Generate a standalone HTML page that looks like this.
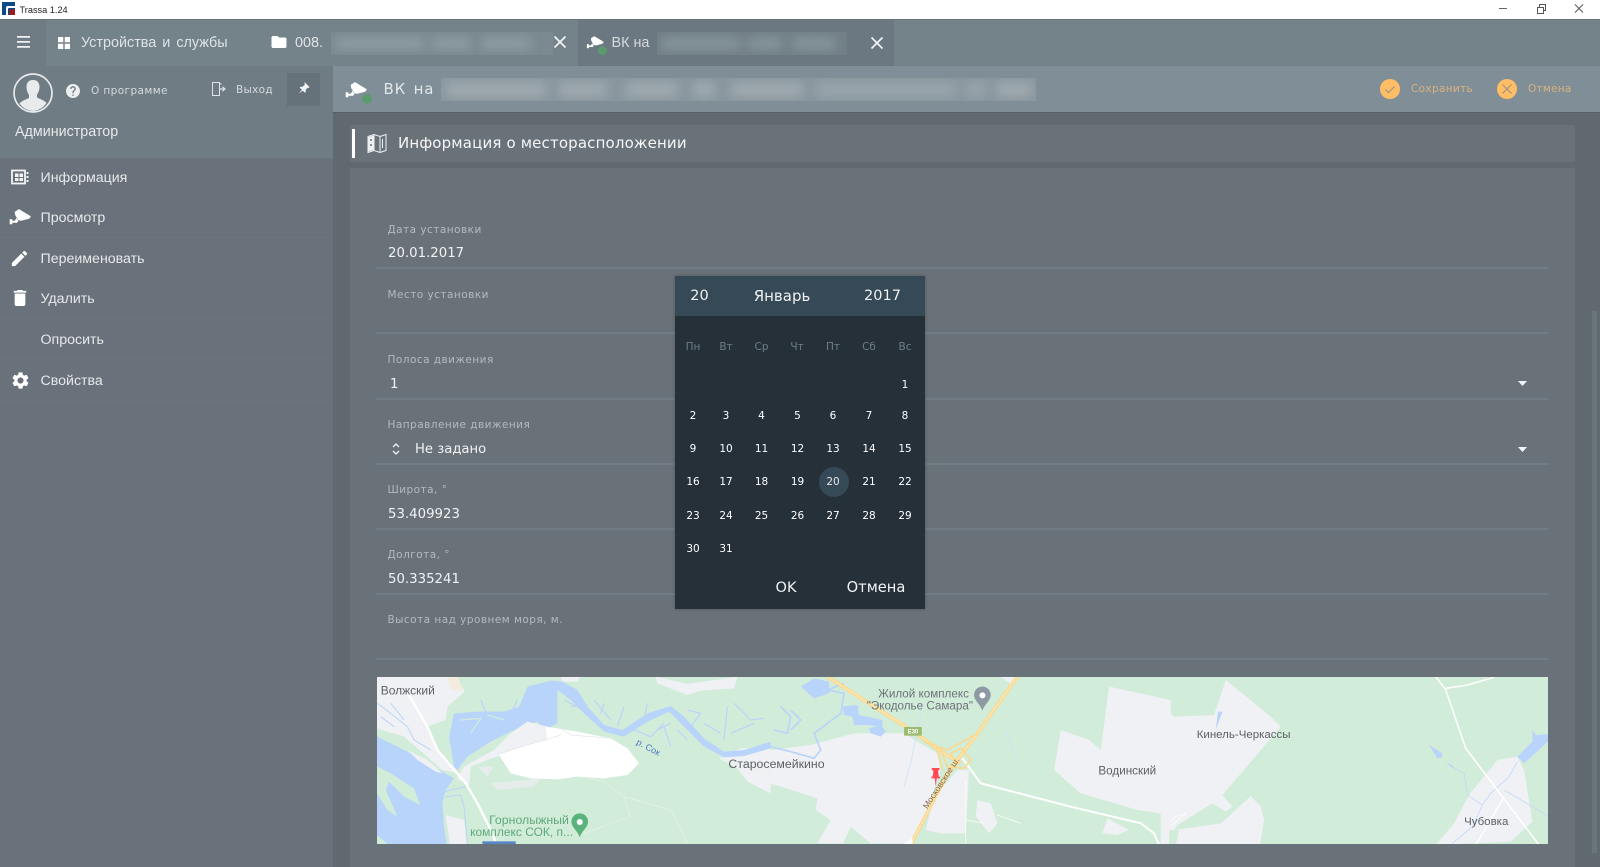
<!DOCTYPE html>
<html lang="ru">
<head>
<meta charset="utf-8">
<title>Trassa 1.24</title>
<style>
html,body{margin:0;padding:0;width:1600px;height:867px;overflow:hidden;background:#60696d}
#r{position:relative;width:1600px;height:867px;overflow:hidden;font-family:"Liberation Sans",sans-serif;color:#e8ebec}
.b{position:absolute}
.t{position:absolute;white-space:nowrap;line-height:1}
.d{font-family:"DejaVu Sans",sans-serif}
.l{font-family:"DejaVu Sans",sans-serif;font-size:10.5px;letter-spacing:.47px;color:#b4babd}
.v{font-family:"DejaVu Sans",sans-serif;font-size:13.3px;color:#f0f2f3}
.m{font-size:14.2px;color:#e6e9ea;left:40.5px}
svg{position:absolute;overflow:visible}
.s{position:absolute;background:#717c84;height:2px;left:376px;width:1172px}
.bl{position:absolute;filter:blur(5px);border-radius:4px}
.w{font-family:"DejaVu Sans",sans-serif;font-size:10.5px;color:#6f7d86;transform:translateX(-50%)}
.n{font-family:"DejaVu Sans",sans-serif;font-size:10.5px;color:#fff;transform:translateX(-50%)}
</style>
</head>
<body>
<div id="r">
<!-- title bar -->
<div class="b" style="left:0;top:0;width:1600px;height:19px;background:#fff"></div>
<div class="b" style="left:0;top:19px;width:1600px;height:1px;background:#687378"></div>
<svg style="left:2px;top:2px" width="14" height="14"><rect width="13" height="13" fill="#0f4a86"/><path d="M4 13V6q0-2 2-2h7v2H7q-1 0-1 1v6z" fill="#fff"/><rect x="7.5" y="7.5" width="5.5" height="5.5" fill="#a11a1a"/></svg>
<div class="t" style="left:19.5px;top:5.5px;font-size:9.2px;color:#222">Trassa 1.24</div>
<svg style="left:1495px;top:0" width="100" height="19"><path d="M4 8.5h8" stroke="#666" stroke-width="1"/><path d="M42.5 7.5h6v6h-6zM44.5 7.5v-3h6v6h-2" fill="none" stroke="#555" stroke-width="1"/><path d="M80 4.5l8 8M88 4.5l-8 8" stroke="#555" stroke-width="1"/></svg>

<!-- tabs -->
<div class="b" style="left:0;top:20px;width:1600px;height:46px;background:#748289"></div>
<div class="b" style="left:0;top:20px;width:46px;height:46px;background:#6f7c83"></div>
<div class="b" style="left:578px;top:20px;width:316px;height:46px;background:#6b7881"></div>
<svg style="left:17px;top:36px" width="13" height="12"><path d="M0 0h13v1.8H0zM0 5h13v1.8H0zM0 10h13v1.8H0z" fill="#f0f2f3"/></svg>
<svg style="left:58px;top:37px" width="12" height="12"><path d="M0 0h5.3v5.3H0zM6.7 0H12v5.3H6.7zM0 6.7h5.3V12H0zM6.7 6.7H12V12H6.7z" fill="#fff"/></svg>
<div class="t" style="left:81px;top:35.500px;font-size:14.4px;color:#dfe3e5;word-spacing:2px">Устройства и службы</div>
<svg style="left:270px;top:33px" width="18" height="18" viewBox="0 0 24 24"><path fill="#fff" d="M10 4H4c-1.1 0-2 .9-2 2v12c0 1.1.9 2 2 2h16c1.1 0 2-.9 2-2V8c0-1.1-.9-2-2-2h-8l-2-2z"/></svg>
<div class="t" style="left:295px;top:35.500px;font-size:14.4px;color:#dfe3e5">008.</div>
<div class="b" style="left:331px;top:32px;width:222px;height:23px;background:#7b8991;overflow:hidden"><div class="bl" style="left:4px;top:5px;width:90px;height:13px;background:#8c9aa1"></div><div class="bl" style="left:100px;top:5px;width:40px;height:13px;background:#8c9aa1"></div><div class="bl" style="left:150px;top:5px;width:50px;height:13px;background:#8c9aa1"></div></div>
<svg style="left:553px;top:35px" width="14" height="14"><path d="M1.5 1.5l11 11M12.500 1.500l-11 11" stroke="#f2f4f5" stroke-width="1.7"/></svg>
<svg style="left:870px;top:36px" width="14" height="14"><path d="M1.500 1.500l11 11M12.500 1.500l-11 11" stroke="#f2f4f5" stroke-width="1.700"/></svg>
<svg style="left:587px;top:36px" width="17" height="12" viewBox="0 0 21 15"><path fill="#fff" stroke="#fff" stroke-width=".6" d="M5 3 9 .5 20.500 7.500 19 9.500 11 11.500 8.500 11 5.500 6zM0 15V10.500H2V12H5L6.500 9.500 8 12 7 13.500H2V15z"/></svg>
<div class="b" style="left:598px;top:46px;width:9px;height:9px;border-radius:50%;background:#5b9a6c"></div>
<div class="t" style="left:611.500px;top:35.500px;font-size:14.400px;color:#d5dadc">ВК на</div>
<div class="b" style="left:657px;top:32px;width:190px;height:23px;background:#727f87;overflow:hidden"><div class="bl" style="left:4px;top:5px;width:80px;height:13px;background:#85939a"></div><div class="bl" style="left:90px;top:5px;width:36px;height:13px;background:#85939a"></div><div class="bl" style="left:135px;top:5px;width:44px;height:13px;background:#85939a"></div></div>

<!-- sidebar -->
<div class="b" style="left:0;top:66px;width:333px;height:92px;background:#707c84"></div>
<div class="b" style="left:0;top:158px;width:333px;height:709px;background:#69727a"></div>
<svg style="left:13px;top:73px" width="40" height="40"><circle cx="20" cy="20" r="19" fill="#707c84" stroke="#e8ebec" stroke-width="1.700"/><path d="M20 7c4.500 0 6.500 3 6.500 7 0 3-1 5.500-2.500 7.500v3c3 1.500 7 2.500 9.500 5.500A18 18 0 0 1 20 38 18 18 0 0 1 6.500 30.500c2.500-3 6.500-4 9.500-5.500v-3C14.500 19.500 13.500 17 13.500 14c0-4 2-7 6.500-7z" fill="#e8ebec"/></svg>
<svg style="left:66px;top:84px" width="14" height="14" viewBox="2 2 20 20"><path fill="#eceef0" d="M12 2C6.480 2 2 6.480 2 12s4.480 10 10 10 10-4.480 10-10S17.520 2 12 2zm1 17h-2v-2h2v2zm2.070-7.750l-.9.920C13.450 12.900 13 13.500 13 15h-2v-.5c0-1.100.45-2.100 1.170-2.830l1.240-1.260c.37-.36.59-.86.59-1.410 0-1.100-.9-2-2-2s-2 .9-2 2H8c0-2.210 1.790-4 4-4s4 1.790 4 4c0 .88-.36 1.680-.93 2.250z"/></svg>
<div class="t d" style="left:91px;top:85.500px;font-size:10.500px;letter-spacing:.4px;color:#d5dadc">О программе</div>
<svg style="left:212px;top:82px" width="14" height="14"><path d="M.5.5h7v13h-7zM7.500 1l2 1.500" fill="none" stroke="#dfe3e5" stroke-width="1"/><path d="M8 7h4M10.500 4.800 13 7l-2.500 2.200" fill="none" stroke="#dfe3e5" stroke-width="1.200"/></svg>
<div class="t d" style="left:236px;top:84.500px;font-size:10.500px;letter-spacing:.3px;color:#d5dadc">Выход</div>
<div class="b" style="left:287px;top:73px;width:33px;height:33px;background:#66727a"></div>
<svg style="left:298px;top:82px" width="12" height="12" viewBox="0 0 14 14"><path fill="#f2f4f5" d="M8 .5 13.500 6 12.500 7 11.500 6.500 9 9 9 11.500 8 12.500 5.500 10 1 13.500 4.500 9 2 6.500 3 5.500 5.500 5.500 8 3 7.500 1.500z"/></svg>
<div class="t" style="left:15px;top:125px;font-size:14.300px;color:#e6e9ea">Администратор</div>

<svg style="left:11px;top:169px" width="18" height="16"><rect x="1" y="1.500" width="13" height="13" fill="none" stroke="#f2f4f5" stroke-width="1.800"/><path d="M4 4.500h3.500V8H4zM8.500 4.500H12V8H8.500zM4 9h3.500v3H4zM8.500 9H12v3H8.500zM15.500 3h2v2h-2zM15.500 7h2v2h-2zM15.500 11h2v2h-2z" fill="#f2f4f5"/></svg>
<div class="t m" style="top:171px">Информация</div>
<svg style="left:10px;top:209px" width="21" height="15" viewBox="0 0 21 15"><path fill="#fff" stroke="#fff" stroke-width=".6" d="M5 3 9 .5 20.500 7.500 19 9.500 11 11.500 8.500 11 5.500 6zM0 15V10.500H2V12H5L6.500 9.500 8 12 7 13.500H2V15z"/></svg>
<div class="t m" style="top:211px">Просмотр</div>
<svg style="left:11px;top:250px" width="17" height="17" viewBox="2 2 20 20"><path fill="#fff" d="M3 17.250V21h3.750L17.810 9.940l-3.750-3.750L3 17.250zM20.710 7.040c.39-.39.39-1.020 0-1.410l-2.340-2.340c-.39-.39-1.020-.39-1.410 0l-1.830 1.830 3.750 3.750 1.830-1.830z"/></svg>
<div class="t m" style="top:252px">Переименовать</div>
<svg style="left:12px;top:290px" width="16" height="16" viewBox="3 3 18 18"><path fill="#fff" d="M6 19c0 1.100.9 2 2 2h8c1.100 0 2-.9 2-2V7H6v12zM19 4h-3.500l-1-1h-5l-1 1H5v2h14V4z"/></svg>
<div class="t m" style="top:292px">Удалить</div>
<div class="t m" style="top:333px">Опросить</div>
<svg style="left:11.500px;top:372px" width="17" height="17" viewBox="2 2 20 20"><path fill="#fff" d="M19.140 12.940c.04-.3.06-.61.06-.94 0-.32-.02-.64-.07-.94l2.030-1.580c.18-.14.23-.41.12-.61l-1.920-3.320c-.12-.22-.37-.29-.59-.22l-2.390.96c-.5-.38-1.030-.7-1.620-.94l-.36-2.540c-.04-.24-.24-.41-.48-.41h-3.840c-.24 0-.43.17-.47.41l-.36 2.540c-.59.24-1.130.57-1.620.94l-2.390-.96c-.22-.08-.47 0-.59.22L2.740 8.870c-.12.21-.08.47.12.61l2.030 1.580c-.05.3-.09.63-.09.94s.02.64.07.94l-2.030 1.580c-.18.14-.23.41-.12.61l1.920 3.320c.12.22.37.29.59.22l2.390-.96c.5.38 1.030.7 1.620.94l.36 2.540c.05.24.24.41.48.41h3.840c.24 0 .44-.17.47-.41l.36-2.540c.59-.24 1.130-.56 1.620-.94l2.390.96c.22.08.47 0 .59-.22l1.920-3.320c.12-.22.07-.47-.12-.61l-2.010-1.580zM12 15.600c-1.980 0-3.600-1.620-3.600-3.600s1.620-3.600 3.600-3.600 3.600 1.620 3.600 3.600-1.620 3.600-3.600 3.600z"/></svg>
<div class="t m" style="top:373.500px">Свойства</div>
<div class="b" style="left:0;top:237px;width:333px;height:1px;background:#6c757d"></div>
<div class="b" style="left:0;top:318px;width:333px;height:1px;background:#6c757d"></div>
<div class="b" style="left:0;top:359px;width:333px;height:1px;background:#6c757d"></div>
<div class="b" style="left:0;top:400px;width:333px;height:1px;background:#6c757d"></div>

<!-- page header -->
<div class="b" style="left:333px;top:66px;width:1267px;height:46px;background:#808f97"></div>
<div class="b" style="left:333px;top:112px;width:1267px;height:1px;background:#576064"></div>
<svg style="left:346px;top:82px" width="21" height="15" viewBox="0 0 21 15"><path fill="#fff" stroke="#fff" stroke-width=".6" d="M5 3 9 .5 20.500 7.500 19 9.500 11 11.500 8.500 11 5.500 6zM0 15V10.500H2V12H5L6.500 9.500 8 12 7 13.500H2V15z"/></svg>
<div class="b" style="left:362px;top:94px;width:10px;height:10px;border-radius:50%;background:#5b9a6c"></div>
<div class="t d" style="left:383.500px;top:81.500px;font-size:15px;letter-spacing:.8px;word-spacing:2px;color:#e3e7e8">ВК на</div>
<div class="b" style="left:441px;top:78px;width:595px;height:23px;background:#8a979e;overflow:hidden"><div class="bl" style="left:5px;top:4px;width:100px;height:15px;background:#9ea9af"></div><div class="bl" style="left:118px;top:4px;width:48px;height:15px;background:#9ea9af"></div><div class="bl" style="left:185px;top:4px;width:52px;height:15px;background:#9ea9af"></div><div class="bl" style="left:252px;top:4px;width:22px;height:15px;background:#9ea9af"></div><div class="bl" style="left:290px;top:4px;width:72px;height:15px;background:#9ea9af"></div><div class="bl" style="left:375px;top:4px;width:140px;height:15px;background:#98a4ab"></div><div class="bl" style="left:525px;top:4px;width:20px;height:15px;background:#98a4ab"></div><div class="bl" style="left:555px;top:4px;width:36px;height:15px;background:#9ea9af"></div></div>
<svg style="left:1380px;top:79px" width="20" height="20"><circle cx="10" cy="10" r="10" fill="#ffbd66"/><path d="M5.500 10.500l3 3 6-6" fill="none" stroke="#a99a80" stroke-width="1.300"/></svg>
<div class="t d" style="left:1411px;top:84px;font-size:10.500px;letter-spacing:.33px;color:#d9b27c">Сохранить</div>
<svg style="left:1497px;top:79px" width="20" height="20"><circle cx="10" cy="10" r="10" fill="#ffbd66"/><path d="M5.500 5.500l9 9M14.500 5.500l-9 9" stroke="#a99a80" stroke-width="1.300"/></svg>
<div class="t d" style="left:1528px;top:84px;font-size:10.500px;letter-spacing:.25px;color:#d9b27c">Отмена</div>

<!-- section header -->
<div class="b" style="left:350px;top:125px;width:1225px;height:36.500px;background:#6a7279"></div>
<div class="b" style="left:352px;top:129px;width:3px;height:29px;background:#fff"></div>
<svg style="left:367px;top:134px" width="20" height="19" viewBox="0 0 20 19"><path d="M1 2.500 7 .5 13 2.500 19 .5V16.500L13 18.500 7 16.500 1 18.500z" fill="none" stroke="#eef0f1" stroke-width="1"/><path d="M1.500 3 6.500 1.500V16L1.500 17.500z" fill="#eef0f1"/><path d="M7 1v15.500M13 2.500v16M15.500 5v9" stroke="#eef0f1" stroke-width="1"/><circle cx="4" cy="6" r="1" fill="#6a7279"/><circle cx="4" cy="11" r="1" fill="#6a7279"/></svg>
<div class="t d" style="left:398px;top:135.500px;font-size:15px;letter-spacing:.15px;color:#f5f6f7">Информация о месторасположении</div>

<!-- panel -->
<div class="b" style="left:350px;top:168px;width:1225px;height:699px;background:#6a7279"></div>
<div class="b" style="left:1592px;top:311px;width:5px;height:542px;background:#6a757a"></div>

<div class="t l" style="left:387.500px;top:224.500px">Дата установки</div>
<div class="t v" style="left:388px;top:246.500px">20.01.2017</div>
<div class="s" style="top:267px"></div>
<div class="t l" style="left:387.500px;top:289.500px">Место установки</div>
<div class="s" style="top:332px"></div>
<div class="t l" style="left:387.500px;top:354.500px">Полоса движения</div>
<div class="t v" style="left:390px;top:378px">1</div>
<div class="s" style="top:397.500px"></div>
<svg style="left:1518px;top:381px" width="10" height="6"><path d="M0 0h9L4.500 5z" fill="#f2f4f5"/></svg>
<div class="t l" style="left:387.500px;top:419.500px">Направление движения</div>
<svg style="left:392px;top:442px" width="8" height="14"><path d="M1 5l3-3 3 3M1 9l3 3 3-3" fill="none" stroke="#f2f4f5" stroke-width="1.300"/></svg>
<div class="t v" style="left:415px;top:443px;font-size:13.200px">Не задано</div>
<div class="s" style="top:463px"></div>
<svg style="left:1518px;top:446.500px" width="10" height="6"><path d="M0 0h9L4.500 5z" fill="#f2f4f5"/></svg>
<div class="t l" style="left:387.500px;top:484.500px">Широта, °</div>
<div class="t v" style="left:388px;top:508px">53.409923</div>
<div class="s" style="top:528px"></div>
<div class="t l" style="left:387.500px;top:549.500px">Долгота, °</div>
<div class="t v" style="left:388px;top:573px">50.335241</div>
<div class="s" style="top:593px"></div>
<div class="t l" style="left:387.500px;top:614.500px">Высота над уровнем моря, м.</div>
<div class="s" style="top:658px"></div>

<!-- map -->
<div class="b" style="left:376.500px;top:677px;width:1171.500px;height:167px;overflow:hidden;background:#d2ecda">
<svg width="1172" height="167" viewBox="376.500 677 1171.500 167" style="left:0;top:0" font-family="Liberation Sans, sans-serif">
<g transform="translate(370 670) scale(.33333)">
<path fill="#f0f1f4" d="M0 0H240L282 65 230 110 225 150 170 170 200 240 265 310 215 300 100 200 0 170z"/>
<path fill="#f3ecdc" d="M230 22H262L275 60 240 60z"/>
<path fill="#f0f1f4" d="M855 20 950 42 1100 20 1090 55 990 62 950 75 860 40zM1045 265 1110 235 1200 235V370L1130 335 1100 295zM570 20H630L620 35 575 35zM225 435 280 450 290 540H240z"/>
<path fill="#b9d4fa" d="M0 190 120 250 215 305 250 325 225 360 215 400 220 470 230 540H0z"/>
<path fill="#d2ecda" d="M0 280 60 310 130 355 148 405 100 380 55 335 45 360 80 440 50 420 0 340zM0 480 60 530H0z"/>
<path fill="#f0f1f4" d="M110 240 170 270 215 310 195 305 140 270zM20 110 70 120 100 180 60 160z"/>
<path fill="none" stroke="#b9d4fa" stroke-width="3" d="M20 100 60 130 110 170 130 210 180 240M30 140 70 170M60 100 100 150M220 365 285 350M225 380 270 375 280 410 290 520"/>
<path fill="#b9d4fa" d="M235 200 250 130 320 125 400 125 445 110 470 50 540 32 575 35 620 60 650 110 700 165 755 180 830 130 900 108 940 140 1000 205 1060 245 1120 240 1200 215V235L1120 258 1060 262 1000 230 930 160 895 125 830 155 760 200 700 185 640 130 600 90 560 60 560 160 520 180 500 155 440 175 360 215 290 260 260 300 250 290z"/>
<path fill="none" stroke="#d2ecda" stroke-width="4" d="M270 150 330 145 300 190M350 135 400 150"/>
<path fill="none" stroke="#b9d4fa" stroke-width="3.500" d="M330 90 345 125M440 90 420 130M670 90 720 150M760 110 740 170M830 100 820 150M780 175 840 200 880 160M880 170 900 230M950 120 990 130 960 170M1070 110 1060 210M1090 100 1140 150 1180 145M1080 190 1150 160M1000 160 1050 190M580 90 640 120M600 110 650 105M690 130 700 100M860 180 900 160M920 180 950 210"/>
<path fill="#f0f1f4" d="M530 170 470 155 420 190 370 240 280 290 258 325 295 345 300 290 370 262 470 240 530 210z"/>
<path fill="#e6ecea" d="M360 340 510 325 490 350 380 360zM320 290 370 290 350 320z"/>
<path fill="#fff" d="M385 255 470 225 530 210 525 170 620 185 720 205 770 235 805 280 770 315 700 325 620 320 560 328 480 325 420 310z"/>
<path fill="none" stroke="#e4e6e8" stroke-width="2" d="M565 172 600 195 720 205M380 252 570 195"/>
<path fill="none" stroke="#fff" stroke-width="7" d="M105 60 170 170 200 240 285 340 320 400 360 480 378 525"/>
<path fill="none" stroke="#e2f2e7" stroke-width="2.500" d="M650 325 700 335 760 380 900 420 950 520M760 380 778 440 640 490M1050 265 1200 315"/>
<rect x="335" y="514" width="100" height="12" fill="#5a86c8"/>
<text x="30" y="74" font-size="36" fill="#5c6066">Волжский</text>
<text transform="translate(795 222) rotate(28)" font-size="27" fill="#4a78c4">р. Сок</text>
<text x="355" y="462" font-size="37" fill="#5fa97d">Горнолыжный</text>
<text x="298" y="498" font-size="36" fill="#5fa97d">комплекс СОК, п...</text>
<path fill="#5bb37c" d="M627 430c14 0 25 11 25 25 0 17-17 25-25 47-8-22-25-30-25-47 0-14 11-25 25-25z"/>
<circle cx="627" cy="456" r="9" fill="#fff"/>
</g>
<g transform="translate(770 670) scale(.33333)">
<path fill="#f0f1f4" d="M140 520 180 450 135 420 140 385 0 340 0 240 120 225 250 190 400 190 440 215 500 250 510 300 470 420 420 520zM465 480 490 380 560 300 595 300 585 490 510 490zM620 390 660 400 680 460 655 490 615 440zM1015 50 1200 90V435L1100 420 930 370 850 300 870 180 955 210 990 240zM995 490 1010 445 1075 480 1040 495zM690 20H740L725 45z"/>
<path fill="#d2ecda" d="M215 525 240 470 300 520zM0 355 60 365 0 400z"/>
<path fill="#b9d4fa" d="M90 50 130 25 175 35 175 70 130 85zM215 110 260 105 265 135 335 150 335 170 290 165 250 165 245 140 220 135zM295 175 330 165 345 185 330 200 300 190z"/>
<path fill="none" stroke="#b9d4fa" stroke-width="5" d="M0 230 60 245 130 265 150 240 130 190 210 130 220 70 170 60 220 40M10 180 50 190 60 140 30 110M60 180 90 150 60 120"/>
<path fill="none" stroke="#cfe0f8" stroke-width="2.500" d="M400 350 420 280 450 130 455 100M705 185 740 265"/>
<path fill="none" stroke="#fff" stroke-width="6" d="M575 265 630 340 900 410 1110 460 1150 490 1165 525"/>
<path fill="none" stroke="#fff" stroke-width="2" d="M585 450 640 460M680 435 750 460M585 330V525"/>
<path fill="none" stroke="#fad98d" stroke-width="11" d="M170 20 420 180 520 250 570 280M740 20 620 190 530 310 420 525"/>
<path fill="none" stroke="#fde9bd" stroke-width="3" d="M170 20 420 180 520 250 570 280M740 20 620 190 530 310 420 525"/>
<path fill="none" stroke="#fad98d" stroke-width="5" d="M495 225 515 300M620 190 530 240 460 215M510 240 530 290 580 295 600 270 570 235 540 250 560 285"/>
<path fill="#fff" d="M395 525 425 505 425 525z"/>
<rect x="400" y="171" width="53" height="26" fill="#9bbb70"/>
<text x="426.500" y="190" font-size="18" font-weight="bold" fill="#fff" text-anchor="middle">E30</text>
<text transform="translate(470 418) rotate(-57)" font-size="26" fill="#8c6a44">Московское ш.</text>
<path fill="#ff4a55" d="M483 294H506V300L502 302 504 320H508V325H498L495 350 492 325H482V320H486L488 302 483 300z"/>
<text x="322" y="83" font-size="35" fill="#6d7378">Жилой комплекс</text>
<text x="288" y="118" font-size="35" fill="#6d7378">"Экодолье Самара"</text>
<path fill="#8d9aa3" d="M635 50c14 0 25 11 25 25 0 17-17 25-25 47-8-22-25-30-25-47 0-14 11-25 25-25z"/>
<circle cx="635" cy="76" r="9" fill="#fff"/>
<text x="983" y="313" font-size="35" fill="#5c6066">Водинский</text>
<text x="-127" y="294" font-size="37" fill="#5c6066">Старосемейкино</text>
</g>
<g transform="translate(1170 670) scale(.33333)">
<path fill="#f0f1f4" d="M-30 100 10 140 130 135 165 30 300 140 330 170 155 375 185 410 165 425 125 400 20 465 10 480 150 460 190 425 240 378 270 410 280 450 268 525H-30z"/>
<path fill="#d2ecda" d="M-5 480 25 480 15 525H-5z"/>
<path fill="#b9d4fa" d="M142 125 155 125 135 180z"/>
<path fill="#f0f1f4" d="M980 270 1040 260 1060 300 1085 455 1020 515 795 525 850 460 895 375z"/>
<path fill="#b9d4fa" d="M1040 260 1085 215 1085 180 1095 195 1135 192V212L1060 280zM775 225 815 250 812 262 800 265zM825 275 850 290 845 295z"/>
<path fill="none" stroke="#b9d4fa" stroke-width="2" d="M1040 275 1015 320 960 370 935 405 890 375 880 310 850 295M1000 360 1060 395 1135 440M935 405 905 470 845 520"/>
<path fill="none" stroke="#fff" stroke-width="4.500" d="M795 20 825 60 885 235 1105 525M825 55 890 45 970 22M1000 380 930 500 915 525"/>
<path fill="none" stroke="#fff" stroke-width="2" d="M0 470 45 430 15 440 0 455"/>
<text x="78" y="204" font-size="34.500" fill="#5c6066">Кинель-Черкассы</text>
<text x="880" y="465" font-size="34.500" fill="#5c6066">Чубовка</text>
</g>
</svg>
</div>

<!-- calendar -->
<div class="b" style="left:675px;top:276px;width:250px;height:333px;background:#253038;box-shadow:0 0 3px rgba(0,0,0,.3)"></div>
<div class="b" style="left:675px;top:276px;width:250px;height:40px;background:#364957"></div>
<div class="t d" style="left:699.500px;top:289px;font-size:14.500px;color:#eef0f1;transform:translateX(-50%)">20</div>
<div class="t d" style="left:782px;top:289px;font-size:15px;color:#eef0f1;transform:translateX(-50%)">Январь</div>
<div class="t d" style="left:882.500px;top:289px;font-size:14.500px;color:#eef0f1;transform:translateX(-50%)">2017</div>
<div class="t w" style="left:693px;top:341.500px">Пн</div>
<div class="t w" style="left:726px;top:341.500px">Вт</div>
<div class="t w" style="left:761.500px;top:341.500px">Ср</div>
<div class="t w" style="left:797px;top:341.500px">Чт</div>
<div class="t w" style="left:833px;top:341.500px">Пт</div>
<div class="t w" style="left:869px;top:341.500px">Сб</div>
<div class="t w" style="left:905px;top:341.500px">Вс</div>
<div class="b" style="left:819px;top:466.500px;width:30px;height:30px;border-radius:50%;background:#364957"></div>
<div class="t n" style="left:905px;top:380px">1</div>
<div class="t n" style="left:693px;top:411px">2</div><div class="t n" style="left:726px;top:411px">3</div><div class="t n" style="left:761.500px;top:411px">4</div><div class="t n" style="left:797.500px;top:411px">5</div><div class="t n" style="left:833px;top:411px">6</div><div class="t n" style="left:869px;top:411px">7</div><div class="t n" style="left:905px;top:411px">8</div>
<div class="t n" style="left:693px;top:444px">9</div><div class="t n" style="left:726px;top:444px">10</div><div class="t n" style="left:761.500px;top:444px">11</div><div class="t n" style="left:797.500px;top:444px">12</div><div class="t n" style="left:833px;top:444px">13</div><div class="t n" style="left:869px;top:444px">14</div><div class="t n" style="left:905px;top:444px">15</div>
<div class="t n" style="left:693px;top:476.500px">16</div><div class="t n" style="left:726px;top:476.500px">17</div><div class="t n" style="left:761.500px;top:476.500px">18</div><div class="t n" style="left:797.500px;top:476.500px">19</div><div class="t n" style="left:833px;top:476.500px;color:#e2e6e8">20</div><div class="t n" style="left:869px;top:476.500px">21</div><div class="t n" style="left:905px;top:476.500px">22</div>
<div class="t n" style="left:693px;top:510.500px">23</div><div class="t n" style="left:726px;top:510.500px">24</div><div class="t n" style="left:761.500px;top:510.500px">25</div><div class="t n" style="left:797.500px;top:510.500px">26</div><div class="t n" style="left:833px;top:510.500px">27</div><div class="t n" style="left:869px;top:510.500px">28</div><div class="t n" style="left:905px;top:510.500px">29</div>
<div class="t n" style="left:693px;top:544px">30</div><div class="t n" style="left:726px;top:544px">31</div>
<div class="t d" style="left:786px;top:581px;font-size:14.500px;color:#f2f4f5;transform:translateX(-50%)">OK</div>
<div class="t d" style="left:876px;top:581px;font-size:14.700px;color:#f2f4f5;transform:translateX(-50%)">Отмена</div>
</div>
</body>
</html>
